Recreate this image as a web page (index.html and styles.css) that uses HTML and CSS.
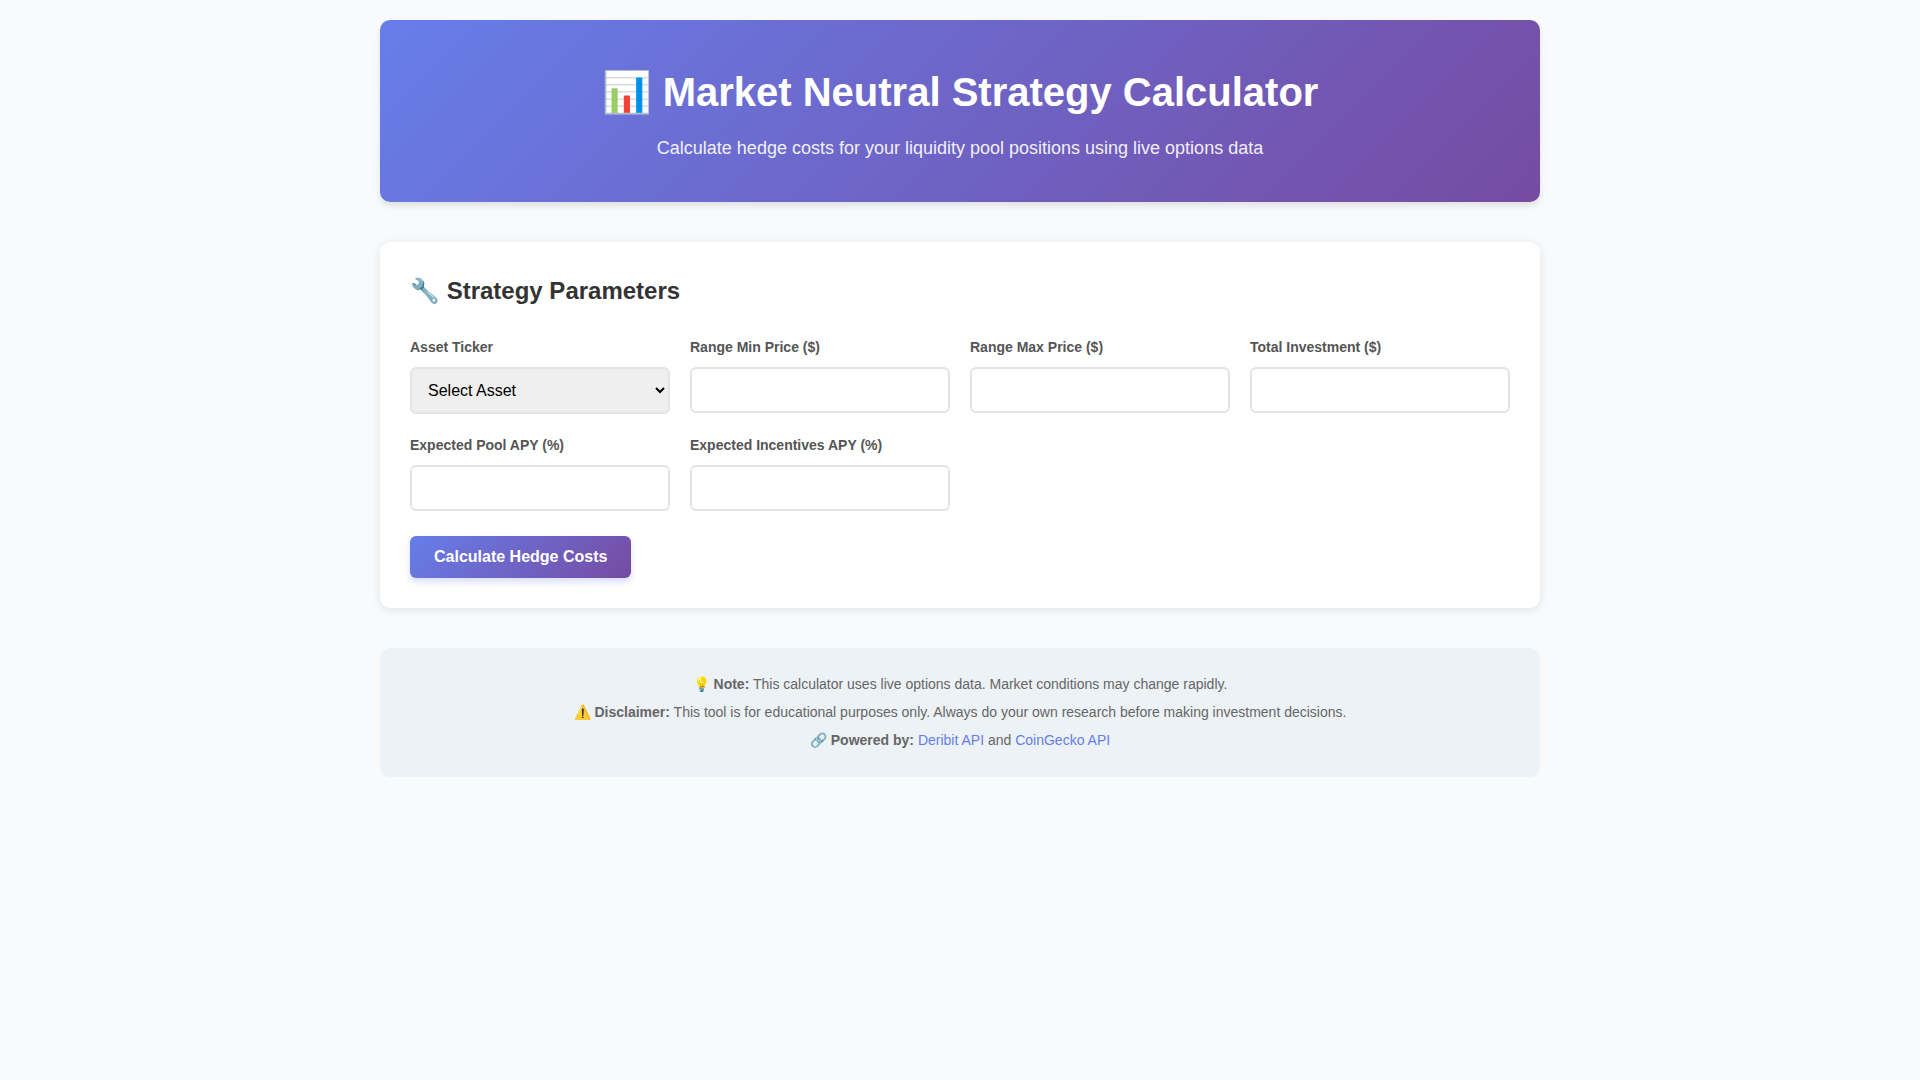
FILE: index.html
```html
<!DOCTYPE html>
<html lang="en">
<head>
<meta charset="utf-8">
<meta name="viewport" content="width=device-width, initial-scale=1">
<title>Market Neutral Strategy Calculator</title>
<link rel="stylesheet" href="styles.css">
</head>
<body>
<div class="container">
  <header class="header">
    <h1>📊 Market Neutral Strategy Calculator</h1>
    <p>Calculate hedge costs for your liquidity pool positions using live options data</p>
  </header>
  <main class="card">
    <h2>🔧 Strategy Parameters</h2>
    <form>
      <div class="form-grid">
        <div class="form-group">
          <label for="asset">Asset Ticker</label>
          <select id="asset"><option value="">Select Asset</option><option>BTC</option><option>ETH</option></select>
        </div>
        <div class="form-group">
          <label for="range-min">Range Min Price ($)</label>
          <input type="number" id="range-min">
        </div>
        <div class="form-group">
          <label for="range-max">Range Max Price ($)</label>
          <input type="number" id="range-max">
        </div>
        <div class="form-group">
          <label for="investment">Total Investment ($)</label>
          <input type="number" id="investment">
        </div>
        <div class="form-group">
          <label for="pool-apy">Expected Pool APY (%)</label>
          <input type="number" id="pool-apy">
        </div>
        <div class="form-group">
          <label for="incentives-apy">Expected Incentives APY (%)</label>
          <input type="number" id="incentives-apy">
        </div>
      </div>
      <button type="submit" class="submit">Calculate Hedge Costs</button>
    </form>
  </main>
  <footer class="footer">
    <p>💡 <strong>Note:</strong> This calculator uses live options data. Market conditions may change rapidly.</p>
    <p>⚠️ <strong>Disclaimer:</strong> This tool is for educational purposes only. Always do your own research before making investment decisions.</p>
    <p>🔗 <strong>Powered by:</strong> <a href="#deribit">Deribit API</a> and <a href="#coingecko">CoinGecko API</a></p>
  </footer>
</div>
</body>
</html>
```
FILE: styles.css
```css
* {
  box-sizing: border-box;
  margin: 0;
  padding: 0;
}

body {
  font-family: "Liberation Sans", Arial, sans-serif;
  line-height: 1.6;
  color: #333;
  background: #f8fafc;
}

.container {
  max-width: 1200px;
  margin: 0 auto;
  padding: 20px;
}

.header {
  margin-bottom: 40px;
  padding: 40px 20px;
  text-align: center;
  color: #fff;
  background: linear-gradient(135deg, #667eea 0%, #764ba2 100%);
  border-radius: 10px;
  box-shadow: 0 4px 6px rgba(0, 0, 0, 0.1);
}

.header h1 {
  margin-bottom: 10px;
  font-size: 40px;
  line-height: 64px;
}

.header p {
  font-size: 18px;
  line-height: 28px;
  opacity: 0.9;
}

.card {
  margin-bottom: 40px;
  padding: 30px;
  background: #fff;
  border-radius: 10px;
  box-shadow: 0 2px 10px rgba(0, 0, 0, 0.1);
}

.card h2 {
  margin-bottom: 26px;
  font-size: 24px;
  line-height: 38px;
}

.form-grid {
  display: grid;
  grid-template-columns: repeat(auto-fit, minmax(250px, 1fr));
  gap: 20px;
  margin-bottom: 25px;
}

.form-group {
  display: flex;
  flex-direction: column;
  align-items: stretch;
}

.form-group label {
  margin-bottom: 8px;
  font-size: 14px;
  font-weight: 600;
  line-height: 23px;
  color: #555;
}

.form-group input,
.form-group select {
  padding: 12px;
  font-family: inherit;
  font-size: 16px;
  border: 2px solid #e1e5e9;
  border-radius: 6px;
}

.submit {
  display: block;
  padding: 12px 24px;
  font-family: inherit;
  font-size: 16px;
  font-weight: 600;
  color: #fff;
  background: linear-gradient(135deg, #667eea 0%, #764ba2 100%);
  border: none;
  border-radius: 6px;
  box-shadow: 0 4px 6px rgba(102, 126, 234, 0.25);
  cursor: pointer;
}

.footer {
  display: flex;
  flex-direction: column;
  gap: 5px;
  padding: 25px;
  text-align: center;
  font-size: 14px;
  line-height: 23px;
  color: #666;
  background: #edf2f7;
  border-radius: 10px;
}

.footer a {
  color: #667eea;
  text-decoration: none;
}
```
